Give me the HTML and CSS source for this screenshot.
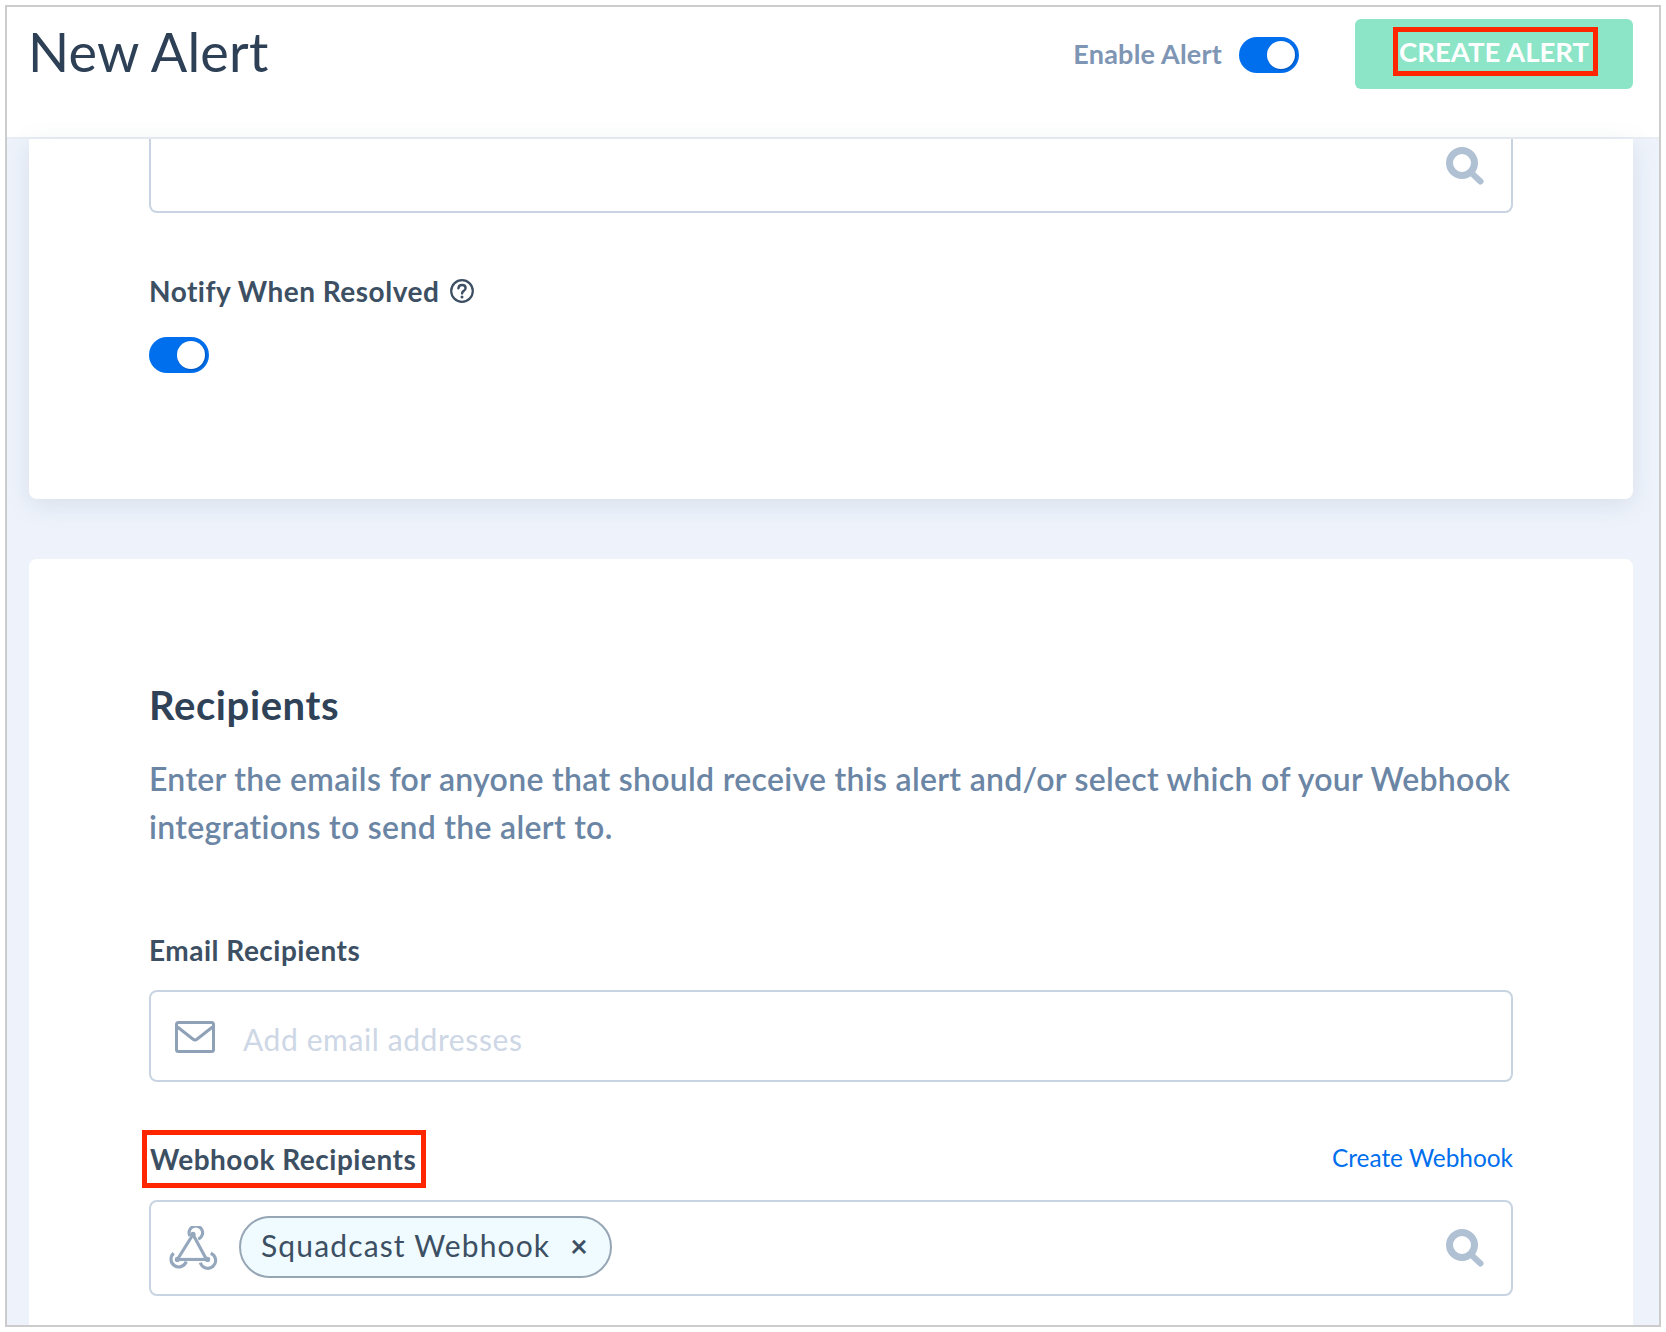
FILE: index.html
```html
<!DOCTYPE html>
<html lang="en">
<head>
    <meta charset="UTF-8">
    <meta name="viewport" content="width=device-width, initial-scale=1.0">
    <title>New Alert</title>
    <link rel="stylesheet" href="styles.css">
</head>
<body>
    <div class="frame">
        <header class="top-bar">
            <h1 class="page-title">New Alert</h1>
            <div class="top-actions">
                <span class="enable-label">Enable Alert</span>
                <span class="switch switch-top"><span class="knob"></span></span>
                <button class="btn-create"><span class="mark mark-btn">CREATE ALERT</span></button>
            </div>
        </header>

        <main class="content">
            <section class="card card-first">
                <div class="field field-cut">
                    <svg class="icon-search" viewBox="0 0 38 38"><circle cx="16" cy="16" r="12.500" fill="none" stroke="#b0c1d4" stroke-width="7"/><path d="M25 25.500l9.500 9" fill="none" stroke="#b0c1d4" stroke-width="6" stroke-linecap="round"/></svg>
                </div>
                <div class="label-row notify-row">
                    <span class="label">Notify When Resolved</span>
                    <svg class="icon-help" viewBox="0 0 24 24"><circle cx="12" cy="12" r="10.800" fill="none" stroke="#3c4f63" stroke-width="2.200"/><path d="M8.400 9.300c.2-2.100 1.700-3.300 3.700-3.300 2.100 0 3.500 1.300 3.500 3 0 1.400-.8 2.200-1.900 2.900-1 .6-1.600 1.200-1.600 2.500" fill="none" stroke="#3c4f63" stroke-width="2.400" stroke-linecap="round"/><circle cx="12" cy="18" r="1.500" fill="#3c4f63"/></svg>
                </div>
                <span class="switch"><span class="knob"></span></span>
            </section>

            <section class="card card-second">
                <h2 class="section-title">Recipients</h2>
                <p class="section-text">Enter the emails for anyone that should receive this alert and/or select which of your Webhook integrations to send the alert to.</p>

                <label class="label email-label">Email Recipients</label>
                <div class="field field-email">
                    <svg class="icon-mail" viewBox="0 0 40 32"><rect x="1.500" y="1.500" width="37" height="29" rx="2" fill="none" stroke="#8ea1b7" stroke-width="3"/><path d="M2.500 6l15.600 12.200c1.200.9 2.600.9 3.800 0L37.500 6" fill="none" stroke="#8ea1b7" stroke-width="3"/></svg>
                    <span class="placeholder">Add email addresses</span>
                </div>

                <div class="label-row webhook-row">
                    <span class="label mark">Webhook Recipients</span>
                    <a class="link" href="#">Create Webhook</a>
                </div>
                <div class="field field-webhook">
                    <svg class="icon-hook" viewBox="0 0 48 42"><g fill="none" stroke="#95a7bc" stroke-width="3"><path d="M21 9.500a6.500 6.500 0 1 1 8 3"/><path d="M24 8l13 24"/><path d="M11 32h27"/><path d="M24 8L9 32"/><path d="M5.500 26a7.500 7.500 0 1 0 12 8"/><path d="M31 35a7.500 7.500 0 1 0 10-9"/></g><g fill="#95a7bc"><circle cx="24" cy="8" r="2.500"/><circle cx="9" cy="32" r="2.500"/><circle cx="38" cy="32" r="2.500"/></g></svg>
                    <span class="chip">Squadcast Webhook<span class="chip-x">×</span></span>
                    <svg class="icon-search" viewBox="0 0 38 38"><circle cx="16" cy="16" r="12.500" fill="none" stroke="#b0c1d4" stroke-width="7"/><path d="M25 25.500l9.500 9" fill="none" stroke="#b0c1d4" stroke-width="6" stroke-linecap="round"/></svg>
                </div>
            </section>
        </main>
    </div>
</body>
</html>
```
FILE: styles.css
```css
* {
    box-sizing: border-box;
}
body {
    margin: 0;
    padding: 5px;
    background: #fff;
    font-family: Lato, "Noto Sans", sans-serif;
    color: #3c4f63;
}
.frame {
    width: 1656px;
    height: 1322px;
    border: 2px solid #ccc;
    background: #eef3fb;
    overflow: hidden;
}

/* top bar */
.top-bar {
    height: 132px;
    background: #fff;
    border-bottom: 2px solid #e9eef5;
    display: flex;
    justify-content: space-between;
    align-items: flex-start;
    padding: 12px 26px 0 21px;
}
.page-title {
    margin: 0;
    font-size: 54px;
    line-height: 66px;
    font-weight: 400;
    color: #2d4056;
    letter-spacing: 0.2px;
}
.top-actions {
    display: flex;
    align-items: center;
}
.enable-label {
    font-size: 27px;
    font-weight: 700;
    color: #7e95b3;
    margin-right: 17px;
    margin-bottom: 2px;
    letter-spacing: 0.2px;
}
.switch {
    display: block;
    width: 60px;
    height: 36px;
    border-radius: 18px;
    background: #006fee;
    padding: 4px 4px 4px 28px;
}
.switch-top {
    margin-top: 2px;
}
.knob {
    display: block;
    width: 28px;
    height: 28px;
    border-radius: 50%;
    background: #fff;
    box-shadow: 1px 1px 2px rgba(0, 40, 100, 0.4);
}
.btn-create {
    width: 278px;
    height: 70px;
    margin-left: 56px;
    border: none;
    border-radius: 6px;
    background: #8de5c8;
    padding: 0 0 5px;
    font-family: inherit;
    font-size: 27.500px;
    font-weight: 700;
    color: #fff;
}
.mark {
    border: 5px solid #ff2600;
}
.mark-btn {
    display: inline-block;
    width: 205px;
    margin-left: 3px;
    padding-right: 3px;
    line-height: 39px;
    white-space: nowrap;
}

/* cards */
.content {
    padding: 0 26px 0 22px;
}
.card {
    background: #fff;
}
.card-first {
    height: 360px;
    padding: 0 120px;
    border-radius: 0 0 8px 8px;
    box-shadow: 0 6px 24px rgba(100, 120, 150, 0.16);
}
.card-second {
    height: 800px;
    margin-top: 60px;
    padding: 122px 120px 0;
    border-radius: 8px 8px 0 0;
}
.field {
    display: flex;
    align-items: center;
    width: 1364px;
    border: 2px solid #c8d4e2;
    border-radius: 8px;
}
.field-cut {
    height: 74px;
    border-top: none;
    border-radius: 0 0 8px 8px;
    justify-content: flex-end;
    padding: 0 27px 18px 0;
}
.icon-search {
    width: 38px;
    height: 38px;
    flex-shrink: 0;
}
.label-row {
    display: flex;
    align-items: center;
}
.label {
    font-size: 28px;
    font-weight: 700;
    color: #3c4f63;
    display: block;
    letter-spacing: 0.5px;
}
.notify-row {
    margin-top: 61px;
    margin-bottom: 29px;
    height: 34px;
}
.icon-help {
    width: 24px;
    height: 24px;
    margin-left: 11px;
}

/* recipients */
.section-title {
    margin: 0;
    font-size: 40px;
    line-height: 48px;
    font-weight: 700;
    color: #2f4257;
    letter-spacing: 0.6px;
}
.section-text {
    margin: 26px -10px 0 0;
    font-size: 32px;
    line-height: 48px;
    font-weight: 600;
    color: #6b85a5;
    letter-spacing: 0.3px;
}
.email-label {
    margin-top: 81px;
    line-height: 36px;
}
.field-email {
    height: 92px;
    margin-top: 22px;
    padding: 0 24px;
}
.icon-mail {
    width: 40px;
    height: 32px;
    margin-top: 2px;
}
.placeholder {
    margin-left: 28px;
    font-size: 30px;
    color: #cdd7e5;
    margin-top: 6px;
    letter-spacing: 0.6px;
}
.webhook-row {
    justify-content: space-between;
    width: 1371px;
    margin-top: 48px;
    height: 58px;
    margin-left: -7px;
}
.webhook-row .mark {
    width: 284px;
    line-height: 48px;
    padding-left: 3px;
    white-space: nowrap;
}
.link {
    font-size: 24.400px;
    color: #006fee;
    text-decoration: none;
    padding-bottom: 4px;
}
.field-webhook {
    height: 96px;
    margin-top: 12px;
    padding: 0 27px 0 17px;
}
.icon-hook {
    width: 50px;
    height: 44px;
}
.chip {
    display: flex;
    align-items: center;
    height: 62px;
    margin-left: 21px;
    margin-right: auto;
    margin-bottom: 3px;
    padding: 0 21px 3px 20px;
    border: 2px solid #97a6b5;
    border-radius: 31px;
    background: #effbff;
    font-size: 30px;
    color: #3c4f63;
    letter-spacing: 1.150px;
}
.chip-x {
    margin-left: 20px;
    font-weight: 700;
}
```
